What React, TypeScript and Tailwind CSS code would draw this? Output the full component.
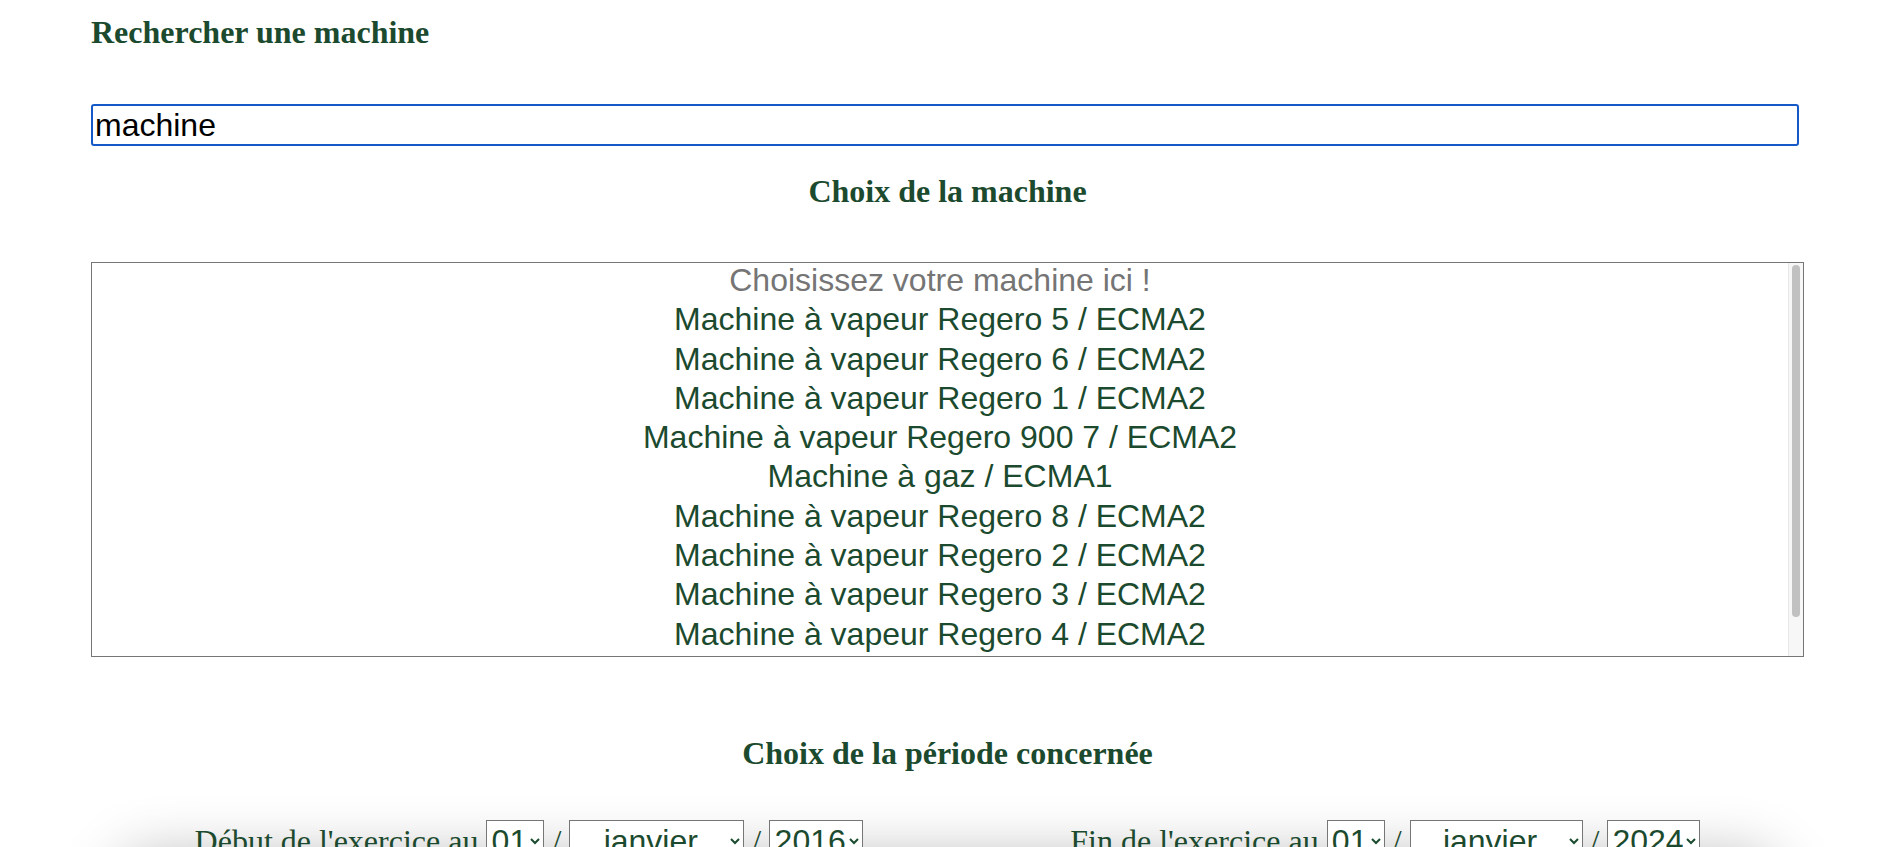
import React, { FC, useState } from "react";

const machines: string[] = [
	"Machine à vapeur Regero 5 / ECMA2",
	"Machine à vapeur Regero 6 / ECMA2",
	"Machine à vapeur Regero 1 / ECMA2",
	"Machine à vapeur Regero 900 7 / ECMA2",
	"Machine à gaz / ECMA1",
	"Machine à vapeur Regero 8 / ECMA2",
	"Machine à vapeur Regero 2 / ECMA2",
	"Machine à vapeur Regero 3 / ECMA2",
	"Machine à vapeur Regero 4 / ECMA2",
	"Machine à vapeur Regero 7 / ECMA2",
];

const days: string[] = Array.from({ length: 31 }, (_, i) => String(i + 1).padStart(2, "0"));
const months: string[] = [
	"janvier",
	"février",
	"mars",
	"avril",
	"mai",
	"juin",
	"juillet",
	"août",
	"septembre",
	"octobre",
	"novembre",
	"décembre",
];
const years: string[] = Array.from({ length: 12 }, (_, i) => String(2014 + i));

/** small native select, text centred like the original form */
const selectClassName: string =
	"h-[42px] border border-[#767676] bg-white font-['Liberation_Sans',sans-serif] text-[32px] text-[#1b4a2e] [text-align-last:center] align-baseline";

const PeriodPicker: FC<{ label: string; year: string; widths: [string, string, string] }> = ({ label, year, widths }) => (
	<p className="whitespace-nowrap text-[32px] leading-[36px]">
		{label}{" "}
		<select defaultValue="01" className={`${selectClassName} ${widths[0]}`}>
			{days.map((d) => (
				<option key={d}>{d}</option>
			))}
		</select>{" "}
		/{" "}
		<select defaultValue="janvier" className={`${selectClassName} ${widths[1]}`}>
			{months.map((m) => (
				<option key={m}>{m}</option>
			))}
		</select>{" "}
		/{" "}
		<select defaultValue={year} className={`${selectClassName} ${widths[2]}`}>
			{years.map((y) => (
				<option key={y}>{y}</option>
			))}
		</select>
	</p>
);

export default function App() {
	const [search, setSearch] = useState<string>("machine");
	const [selected, setSelected] = useState<number>(-1);

	return (
		<div className="relative min-h-screen overflow-hidden bg-white font-['Liberation_Serif',serif] text-[#1b4a2e]">
			<main className="ml-[91px] w-[1713px] pt-[14px]">
				<h2 className="text-[32px] font-bold leading-[36px]">Rechercher une machine</h2>

				<input
					type="text"
					value={search}
					onChange={(e) => setSearch(e.target.value)}
					className="mt-[54px] block h-[42px] w-[1708px] rounded-[3px] border-2 border-[#1459c7] px-[2px] font-['Liberation_Sans',sans-serif] text-[32px] text-black outline-none"
				/>

				<h2 className="mt-[27px] text-center text-[32px] font-bold leading-[36px]">Choix de la machine</h2>

				{/* listbox: rows on the left, the always-on scrollbar on the right */}
				<div className="mt-[53px] flex h-[395px] border border-[#767676] font-['Liberation_Sans',sans-serif] text-[32px]">
					<div className="flex-1 overflow-hidden">
						<div className="-mt-[2px] text-center leading-[39.3px] text-[#757575]">
							Choisissez votre machine ici !
						</div>
						{machines.map((m, i) => (
							<div
								key={m}
								onClick={() => setSelected(i)}
								className={`cursor-default text-center leading-[39.3px] ${
									selected === i ? "bg-[#cecece]" : ""
								} text-[#1b4a2e]`}
							>
								{m}
							</div>
						))}
					</div>
					<div className="w-[15px] border-l border-[#e6e6e6] bg-[#f7f7f7] pt-[2px] pl-[3px]">
						<div className="h-[352px] w-[8px] rounded-full bg-[#c1c1c1]" />
					</div>
				</div>

				<h2 className="mt-[78px] text-center text-[32px] font-bold leading-[36px]">
					Choix de la période concernée
				</h2>

				<div className="mt-[49px] flex justify-around">
					<PeriodPicker label="Début de l'exercice au" year="2016" widths={["w-[58px]", "w-[175px]", "w-[94px]"]} />
					<PeriodPicker label="Fin de l'exercice au" year="2024" widths={["w-[58px]", "w-[173px]", "w-[93px]"]} />
				</div>

				{/* the next section sits below the fold, only its shadow shows */}
				<div className="mx-[30px] mt-[-4px] h-[200px] rounded-[24px] bg-white shadow-[0_0_60px_rgba(0,0,0,0.3)]" />
			</main>
		</div>
	);
}
